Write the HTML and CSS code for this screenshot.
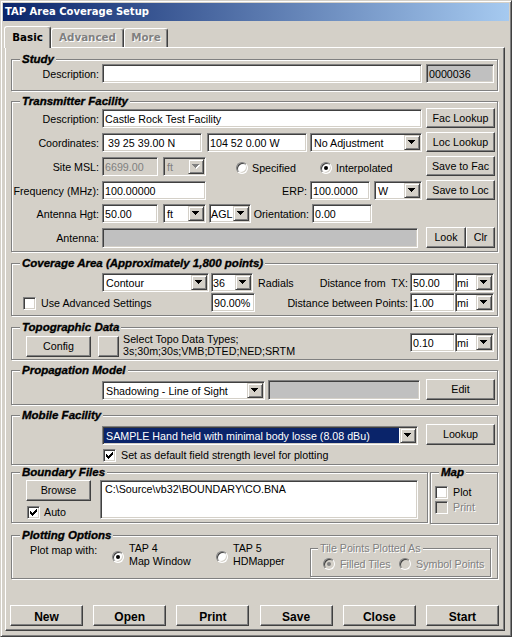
FILE: index.html
```html
<!DOCTYPE html>
<html>
<head>
<meta charset="utf-8">
<title>TAP Area Coverage Setup</title>
<link rel="stylesheet" href="styles.css">
</head>
<body>
<div class="window">
  <div class="titlebar">TAP Area Coverage Setup</div>
  <div class="tabs">
    <div class="tab active t-basic">Basic</div>
    <div class="tab t-adv">Advanced</div>
    <div class="tab t-more">More</div>
  </div>
  <div class="panel">

    <div class="group g-study">
      <div class="legend">Study</div>
      <div class="row">
        <div class="lbl">Description:</div>
        <div class="fld w320"></div>
        <div class="fld ro w68 ml4">0000036</div>
      </div>
    </div>

    <div class="group g-tx">
      <div class="legend">Transmitter Facility</div>
      <div class="row mt3">
        <div class="lbl">Description:</div>
        <div class="fld w320">Castle Rock Test Facility</div>
        <div class="btn w69 ml-auto">Fac Lookup</div>
      </div>
      <div class="row mt4">
        <div class="lbl">Coordinates:</div>
        <div class="fld w100">&nbsp;39 25 39.00 N</div>
        <div class="fld w100 ml5">104 52 0.00 W</div>
        <div class="combo w112 ml3"><span class="val">No Adjustment</span><span class="drop"><svg width="7" height="4" viewBox="0 0 7 4"><path d="M0 0h7v1H0zM1 1h5v1H1zM2 2h3v1H2zM3 3h1v1H3z"/></svg></span></div>
        <div class="btn w69 ml-auto">Loc Lookup</div>
      </div>
      <div class="row mt4">
        <div class="lbl">Site MSL:</div>
        <div class="fld dis w56">6699.00</div>
        <div class="combo dis w43 ml5"><span class="val">ft</span><span class="drop"><svg width="8" height="5" viewBox="0 0 8 5"><path fill="#fff" d="M1 1h7v1H1zM2 2h5v1H2zM3 3h3v1H3zM4 4h1v1H4z"/><path fill="#808080" d="M0 0h7v1H0zM1 1h5v1H1zM2 2h3v1H2zM3 3h1v1H3z"/></svg></span></div>
        <div class="ropt w84 ml30"><span class="radio"></span><span class="rl">Specified</span></div>
        <div class="ropt"><span class="radio on"></span><span class="rl">Interpolated</span></div>
        <div class="btn w69 ml-auto">Save to Fac</div>
      </div>
      <div class="row mt4">
        <div class="lbl">Frequency (MHz):</div>
        <div class="fld w104">100.00000</div>
        <div class="lbl erp">ERP:</div>
        <div class="fld w60">100.0000</div>
        <div class="combo w48 ml4"><span class="val">W</span><span class="drop"><svg width="7" height="4" viewBox="0 0 7 4"><path d="M0 0h7v1H0zM1 1h5v1H1zM2 2h3v1H2zM3 3h1v1H3z"/></svg></span></div>
        <div class="btn w69 ml-auto">Save to Loc</div>
      </div>
      <div class="row mt3">
        <div class="lbl">Antenna Hgt:</div>
        <div class="fld w56">50.00</div>
        <div class="combo w43 ml5"><span class="val">ft</span><span class="drop"><svg width="7" height="4" viewBox="0 0 7 4"><path d="M0 0h7v1H0zM1 1h5v1H1zM2 2h3v1H2zM3 3h1v1H3z"/></svg></span></div>
        <div class="combo w42 ml3"><span class="val tight">AGL</span><span class="drop"><svg width="7" height="4" viewBox="0 0 7 4"><path d="M0 0h7v1H0zM1 1h5v1H1zM2 2h3v1H2zM3 3h1v1H3z"/></svg></span></div>
        <div class="lbl ori">Orientation:</div>
        <div class="fld w60">0.00</div>
      </div>
      <div class="row mt4">
        <div class="lbl">Antenna:</div>
        <div class="fld ro h20 w316"></div>
        <div class="btn h21 w40 ml-auto">Look</div>
        <div class="btn h21 w29">Clr</div>
      </div>
    </div>

    <div class="group g-cov">
      <div class="legend">Coverage Area (Approximately 1,800 points)</div>
      <div class="row pr3 mt5">
        <div class="lbl"></div>
        <div class="combo w107"><span class="val">Contour</span><span class="drop"><svg width="7" height="4" viewBox="0 0 7 4"><path d="M0 0h7v1H0zM1 1h5v1H1zM2 2h3v1H2zM3 3h1v1H3z"/></svg></span></div>
        <div class="combo w42 ml2"><span class="val tight">36</span><span class="drop"><svg width="7" height="4" viewBox="0 0 7 4"><path d="M0 0h7v1H0zM1 1h5v1H1zM2 2h3v1H2zM3 3h1v1H3z"/></svg></span></div>
        <div class="txt ml5">Radials</div>
        <div class="lbl fill">Distance from&nbsp; TX:</div>
        <div class="fld w45">50.00</div>
        <div class="combo w39"><span class="val tight">mi</span><span class="drop"><svg width="7" height="4" viewBox="0 0 7 4"><path d="M0 0h7v1H0zM1 1h5v1H1zM2 2h3v1H2zM3 3h1v1H3z"/></svg></span></div>
      </div>
      <div class="row pr3">
        <div class="adv">
          <div class="chkline">
            <span class="chk"></span><span class="cl">Use Advanced Settings</span>
          </div>
        </div>
        <div class="fld w44">90.00%</div>
        <div class="lbl fill">Distance between Points:</div>
        <div class="fld w45">1.00</div>
        <div class="combo w39"><span class="val tight">mi</span><span class="drop"><svg width="7" height="4" viewBox="0 0 7 4"><path d="M0 0h7v1H0zM1 1h5v1H1zM2 2h3v1H2zM3 3h1v1H3z"/></svg></span></div>
      </div>
    </div>

    <div class="group g-topo">
      <div class="legend">Topographic Data</div>
      <div class="row pr3 mt1">
        <div class="btn h21 w65 ml14 mt4b">Config</div>
        <div class="btn h21 w21 ml7 mt4b"></div>
        <div class="topotext">Select Topo Data Types;<br>3s;30m;30s;VMB;DTED;NED;SRTM</div>
        <div class="fld w45 ml-auto">0.10</div>
        <div class="combo w39"><span class="val tight">mi</span><span class="drop"><svg width="7" height="4" viewBox="0 0 7 4"><path d="M0 0h7v1H0zM1 1h5v1H1zM2 2h3v1H2zM3 3h1v1H3z"/></svg></span></div>
      </div>
    </div>

    <div class="group g-prop">
      <div class="legend">Propagation Model</div>
      <div class="row mt5">
        <div class="lbl"></div>
        <div class="combo w163 mt2"><span class="val">Shadowing - Line of Sight</span><span class="drop"><svg width="7" height="4" viewBox="0 0 7 4"><path d="M0 0h7v1H0zM1 1h5v1H1zM2 2h3v1H2zM3 3h1v1H3z"/></svg></span></div>
        <div class="fld ro h20 w152 ml3"></div>
        <div class="btn h21 w69 ml-auto">Edit</div>
      </div>
    </div>

    <div class="group g-mob">
      <div class="legend">Mobile Facility</div>
      <div class="row mt5">
        <div class="lbl"></div>
        <div class="combo w316 mt2"><span class="val sel">SAMPLE Hand held with minimal body losse (8.08 dBu)</span><span class="drop"><svg width="7" height="4" viewBox="0 0 7 4"><path d="M0 0h7v1H0zM1 1h5v1H1zM2 2h3v1H2zM3 3h1v1H3z"/></svg></span></div>
        <div class="btn h21 w69 ml-auto">Lookup</div>
      </div>
      <div class="chkline mt5 ml91">
        <span class="chk"><svg width="7" height="7" viewBox="0 0 7 7"><path d="M0 2h1v3H0zM1 3h1v3H1zM2 4h1v3H2zM3 3h1v3H3zM4 2h1v3H4zM5 1h1v3H5zM6 0h1v3H6z"/></svg></span><span class="cl">Set as default field strength level for plotting</span>
      </div>
    </div>

    <div class="brow">
      <div class="group g-bnd">
        <div class="legend">Boundary Files</div>
        <div class="bnd-body">
          <div class="bnd-left">
            <div class="btn h21 w65">Browse</div>
            <div class="chkline mt5 ml1">
              <span class="chk"><svg width="7" height="7" viewBox="0 0 7 7"><path d="M0 2h1v3H0zM1 3h1v3H1zM2 4h1v3H2zM3 3h1v3H3zM4 2h1v3H4zM5 1h1v3H5zM6 0h1v3H6z"/></svg></span><span class="cl cl4">Auto</span>
            </div>
          </div>
          <div class="fld area w318">C:\Source\vb32\BOUNDARY\CO.BNA</div>
        </div>
      </div>
      <div class="group g-map">
        <div class="legend">Map</div>
        <div class="chkline mt10 ml4">
          <span class="chk"></span><span class="cl">Plot</span>
        </div>
        <div class="chkline mt2 ml4">
          <span class="chk dis"></span><span class="cl dis-t">Print</span>
        </div>
      </div>
    </div>

    <div class="group g-plot">
      <div class="legend">Plotting Options</div>
      <div class="plotrow">
        <div class="pm-lbl">Plot map with:</div>
        <div class="popt w104"><span class="radio on"></span><span class="pl">TAP 4<br>Map Window</span></div>
        <div class="popt w94"><span class="radio"></span><span class="pl">TAP 5<br>HDMapper</span></div>
        <div class="group g-tile">
          <div class="legend etched">Tile Points Plotted As</div>
          <div class="tilerow">
            <div class="topt w76"><span class="radio dis on"></span><span class="tl dis-t">Filled Tiles</span></div>
            <div class="topt"><span class="radio dis"></span><span class="tl dis-t">Symbol Points</span></div>
          </div>
        </div>
      </div>
    </div>

    <div class="bottom">
      <div class="btn bbtn">New</div>
      <div class="btn bbtn">Open</div>
      <div class="btn bbtn">Print</div>
      <div class="btn bbtn">Save</div>
      <div class="btn bbtn">Close</div>
      <div class="btn bbtn">Start</div>
    </div>

  </div>
</div>
</body>
</html>
```
FILE: styles.css
```css
* { box-sizing: border-box; }
html, body { margin: 0; padding: 0; }
body {
  width: 512px; height: 637px; overflow: hidden;
  background: #d4d0c8;
  font-family: "Liberation Sans", Arial, sans-serif;
  font-size: 10.7px; color: #000;
}

/* window frame */
.window {
  width: 512px; height: 637px;
  background: #d4d0c8;
  border: 1px solid; border-color: #d4d0c8 #404040 #404040 #d4d0c8;
  box-shadow: inset 1px 1px #fff, inset -1px -1px #808080;
  padding: 2px;
  display: flex; flex-direction: column;
}
.titlebar {
  flex: none; height: 18px;
  background: linear-gradient(to right, #0a246a, #a6caf0);
  color: #fff;
  font: bold 10px "DejaVu Sans", Verdana, sans-serif;
  line-height: 18px; padding-left: 2px; white-space: nowrap;
}

/* tabs */
.tabs { flex: none; height: 26px; display: flex; align-items: flex-end; padding-left: 1px; }
.tab {
  flex: none; height: 19px;
  border: 1px solid; border-bottom: 0; border-color: #fff #404040 #fff #fff;
  box-shadow: inset -1px 0 #808080;
  border-radius: 3px 3px 0 0;
  text-align: center;
  font: bold 10.3px "DejaVu Sans", Verdana, sans-serif; line-height: 12px;
  padding-top: 2px;
  color: #808080; text-shadow: 1px 1px #fff;
  background: #d4d0c8;
}
.tab.active {
  height: 22px; margin-bottom: -1px; padding-top: 4px;
  color: #000; text-shadow: none;
  position: relative; z-index: 1;
}
.t-basic { width: 47px; }
.t-adv { width: 73px; }
.t-more { width: 44px; }

.panel {
  flex: none; margin-left: 2px; width: 500px; height: 584px;
  border: 1px solid; border-color: #fff #404040 #404040 #fff;
  box-shadow: inset -1px -1px #808080;
  padding: 0 0 0 5px;
  display: flex; flex-direction: column;
}

/* group boxes */
.group {
  flex: none;
  border: 1px solid #808080;
  box-shadow: inset 1px 1px #fff, 1px 1px #fff;
  display: flex; flex-direction: column;
}
.legend {
  flex: none; align-self: flex-start;
  height: 12px; margin: -7px 0 -2px 8px; padding: 0 2px;
  background: #d4d0c8;
  font: italic bold 11.5px "Liberation Sans", Arial, sans-serif; line-height: 12px;
  -webkit-text-stroke: 0.35px #000;
  white-space: nowrap;
}
.legend.etched {
  font: 10.7px "Liberation Sans", Arial, sans-serif; line-height: 12px;
  -webkit-text-stroke: 0; color: #808080; text-shadow: 1px 1px #fff;
  margin-left: 7px;
}

.g-study { width: 487px; height: 32px; margin-top: 11px; }
.g-tx    { width: 487px; height: 151px; margin-top: 10px; }
.g-cov   { width: 487px; height: 53px; margin-top: 11px; }
.g-topo  { width: 487px; height: 33px; margin-top: 11px; }
.g-prop  { width: 487px; height: 35px; margin-top: 10px; }
.g-mob   { width: 487px; height: 50px; margin-top: 10px; }
.brow    { flex: none; display: flex; align-items: flex-start; height: 52px; margin-top: 7px; }
.g-bnd   { width: 417px; height: 51px; }
.g-map   { width: 68px; height: 52px; margin-left: 2px; }
.g-plot  { width: 487px; height: 44px; margin-top: 11px; }
.g-tile  { width: 181px; height: 29px; margin-top: 9px; }

/* rows */
.row { flex: none; display: flex; align-items: flex-start; height: 20px; padding-right: 2px; white-space: nowrap; }
.row.pr3 { padding-right: 3px; }

.lbl { flex: none; width: 87px; margin-right: 3px; margin-top: 1px; line-height: 20px; text-align: right; white-space: nowrap; }
.lbl.erp { width: 101px; }
.lbl.ori { width: 58px; }
.lbl.fill { flex: 1; width: auto; min-width: 0; margin-right: 2px; }
.txt { flex: none; margin-top: 1px; line-height: 20px; }

/* sunken text field */
.fld {
  flex: none; height: 19px; margin-top: 1px;
  border: 1px solid; border-color: #808080 #fff #fff #808080;
  box-shadow: inset 1px 1px #404040, inset -1px -1px #d4d0c8;
  background: #fff;
  padding: 1px 1px 0 2px; line-height: 16px;
  white-space: nowrap; overflow: hidden;
}
.fld.ro { background: #c0c0c0; }
.fld.dis { background: #d4d0c8; color: #808080; }
.fld.h20 { height: 20px; }
.fld.area { height: 39px; margin-top: 0; line-height: 12px; padding: 2px 0 0 4px; }

/* combo box */
.combo {
  flex: none; display: flex; height: 19px; margin-top: 1px;
  border: 1px solid; border-color: #808080 #fff #fff #808080;
  box-shadow: inset 1px 1px #404040, inset -1px -1px #d4d0c8;
  background: #fff; padding: 1px;
}
.combo.dis { background: #d4d0c8; color: #808080; }
.combo .val { flex: 1; min-width: 0; padding-left: 2px; line-height: 16px; overflow: hidden; white-space: nowrap; }
.combo .val.tight { padding-left: 0; }
.combo .val.sel { background: #0a246a; color: #fff; margin-right: 1px; }
.drop {
  flex: none; width: 16px; height: 15px;
  border: 1px solid; border-color: #d4d0c8 #404040 #404040 #d4d0c8;
  box-shadow: inset 1px 1px #fff, inset -1px -1px #808080;
  background: #d4d0c8; padding: 4px 0 0 3px;
}
.drop svg { display: block; }

/* buttons */
.btn {
  flex: none; height: 20px;
  border: 1px solid; border-color: #fff #404040 #404040 #fff;
  box-shadow: inset -1px -1px #808080;
  background: #d4d0c8;
  text-align: center; line-height: 12px; padding-top: 3px;
  white-space: nowrap;
}
.btn.h21 { height: 21px; }
.bbtn { width: 73px; height: 21px; font: bold 12px "Liberation Sans", Arial, sans-serif; line-height: 13px; padding-top: 5px; }
.bottom { flex: none; display: flex; justify-content: space-between; width: 489px; margin-left: -1px; margin-top: 26px; }

/* checkbox */
.chkline { flex: none; display: flex; align-items: flex-start; height: 13px; white-space: nowrap; }
.chk {
  flex: none; width: 13px; height: 13px;
  border: 1px solid; border-color: #808080 #fff #fff #808080;
  box-shadow: inset 1px 1px #404040, inset -1px -1px #d4d0c8;
  background: #fff; padding: 2px 0 0 2px;
}
.chk svg { display: block; }
.chk.dis { background: #d4d0c8; }
.cl { margin-left: 5px; line-height: 13px; }
.cl.cl4 { margin-left: 4px; }
.dis-t { color: #808080; text-shadow: 1px 1px #fff; }

/* radio */
.radio {
  flex: none; display: block; width: 12px; height: 12px; border-radius: 50%;
  border: 1px solid; border-color: #808080 #fff #fff #808080;
  box-shadow: inset 1px 1px #404040, inset -1px -1px #d4d0c8;
  background: #fff; padding: 3px;
}
.radio.on::after { content: ""; display: block; width: 4px; height: 4px; border-radius: 50%; background: #000; }
.radio.dis { background: #d4d0c8; }
.radio.dis.on::after { background: #808080; }

.ropt { flex: none; display: flex; align-items: flex-start; }
.ropt .radio { margin-top: 6px; }
.ropt .rl { margin-left: 4px; margin-top: 6px; line-height: 12px; }

/* coverage */
.adv { flex: none; width: 199px; padding: 5px 0 0 11px; }

/* topo */
.topotext { flex: none; margin-left: 4px; margin-top: 1px; line-height: 12px; white-space: nowrap; }
.mt4b { margin-top: 4px; }

/* boundary */
.bnd-body { display: flex; align-items: flex-start; margin-top: 4px; }
.bnd-left { flex: none; width: 65px; margin-left: 14px; }
.bnd-body .area { margin-left: 9px; }

/* plotting */
.plotrow { display: flex; align-items: flex-start; }
.pm-lbl { flex: none; width: 82px; margin-left: 18px; margin-top: 5px; line-height: 12px; white-space: nowrap; }
.popt { flex: none; display: flex; align-items: flex-start; }
.popt .radio { margin-top: 12px; }
.popt .pl { margin-left: 5px; margin-top: 3px; line-height: 13px; white-space: nowrap; }
.tilerow { display: flex; align-items: flex-start; margin-top: 6px; margin-left: 12px; }
.topt { flex: none; display: flex; align-items: flex-start; }
.topt .tl { margin-left: 5px; line-height: 12px; white-space: nowrap; }

/* spacing and widths */
.mt1 { margin-top: 1px; } .mt2 { margin-top: 2px; } .mt3 { margin-top: 3px; }
.mt4 { margin-top: 4px; } .mt5 { margin-top: 5px; } .mt10 { margin-top: 10px; }
.ml1 { margin-left: 1px; } .ml2 { margin-left: 2px; } .ml3 { margin-left: 3px; }
.ml4 { margin-left: 4px; } .ml5 { margin-left: 5px; } .ml7 { margin-left: 7px; }
.ml14 { margin-left: 14px; } .ml30 { margin-left: 30px; } .ml91 { margin-left: 91px; }
.ml-auto { margin-left: auto; }
.w21 { width: 21px; } .w29 { width: 29px; } .w39 { width: 39px; } .w40 { width: 40px; }
.w42 { width: 42px; } .w43 { width: 43px; } .w44 { width: 44px; } .w45 { width: 45px; }
.w48 { width: 48px; } .w56 { width: 56px; } .w60 { width: 60px; } .w65 { width: 65px; }
.w68 { width: 68px; } .w69 { width: 69px; } .w76 { width: 76px; } .w84 { width: 84px; }
.w94 { width: 94px; } .w100 { width: 100px; } .w104 { width: 104px; } .w107 { width: 107px; }
.w112 { width: 112px; } .w152 { width: 152px; } .w163 { width: 163px; } .w316 { width: 316px; }
.w318 { width: 318px; } .w320 { width: 320px; }
```
